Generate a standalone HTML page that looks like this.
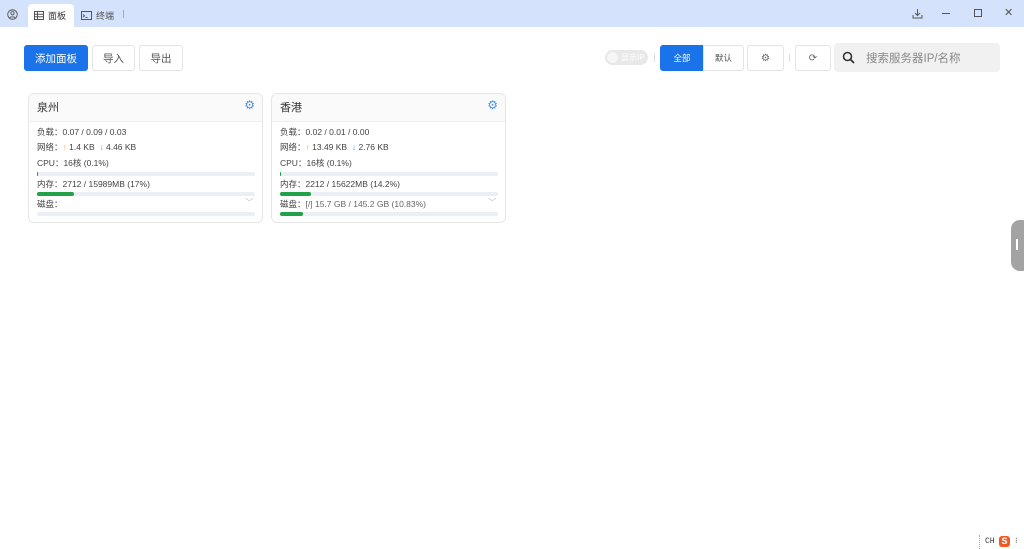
<!DOCTYPE html><html><head><meta charset="utf-8"><style>
*{box-sizing:border-box;margin:0;padding:0}
body{width:1024px;height:549px;overflow:hidden;background:#fff;font-family:"Liberation Sans","Noto Sans CJK SC",sans-serif;color:#333;position:relative}
.top{position:absolute;left:0;top:0;width:1024px;height:27px;background:#d4e3fb}
.abs{position:absolute}
.tab{position:absolute;top:4px;height:23px;font-size:9px;display:flex;align-items:center;gap:4px;padding-left:6px}
.btn{position:absolute;top:45px;height:26px;border:1px solid #e3e3e3;border-radius:3px;font-size:10.5px;color:#555;display:flex;align-items:center;justify-content:center;background:#fff}
.card{position:absolute;top:93px;width:235px;height:130px;border:1px solid #e6e6e6;border-radius:6px;overflow:hidden}
.ch{height:28px;background:#fafafa;border-bottom:1px solid #eee;font-size:11px;padding:5px 8px;position:relative}
.row{position:absolute;left:8px;font-size:8.5px;color:#444;white-space:nowrap}
.bar{position:absolute;left:8px;width:218px;height:4px;border-radius:2px;background:#ebeef3}
.bar i{display:block;height:4px;border-radius:2px;background:#21a148}
</style></head><body>
<div class="top"></div>
<svg class="abs" style="left:7px;top:9px" width="11" height="11" viewBox="0 0 12 12"><circle cx="6" cy="6" r="5.2" fill="none" stroke="#555" stroke-width="1"/><circle cx="6" cy="4.6" r="1.8" fill="none" stroke="#555"/><path d="M2.8 10c1-2 5.4-2 6.4 0" fill="none" stroke="#555"/></svg>
<div class="tab" style="left:28px;width:46px;background:#fff;border-radius:4px 4px 0 0"><svg width="10" height="9"><rect x=".5" y=".5" width="9" height="8" fill="none" stroke="#555"/><path d="M.5 3.2h9M.5 5.8h9M3.5 .5v8" stroke="#555"/></svg>面板</div>
<div class="tab" style="left:75px;color:#555"><svg width="11" height="9"><rect x=".5" y=".5" width="10" height="8" fill="none" stroke="#555"/><path d="M2 3.5l1.5 1.3L2 6M4.5 6.5h2" stroke="#555" fill="none"/></svg>终端</div>
<div class="abs" style="left:123px;top:10px;width:1px;height:8px;background:#aaa"></div>
<svg class="abs" style="left:912px;top:8px" width="11" height="11"><path d="M5.5 1v6M3 5l2.5 2.5L8 5M1 7v3h9V7" stroke="#555" fill="none"/></svg>
<div class="abs" style="left:942px;top:13px;width:8px;height:1px;background:#555"></div>
<div class="abs" style="left:974px;top:9px;width:8px;height:8px;border:1px solid #555"></div>
<div class="abs" style="left:1004px;top:6px;font-size:11px;color:#555">✕</div>

<div class="btn" style="left:24px;width:64px;background:#1a73e8;border-color:#1a73e8;color:#fff">添加面板</div>
<div class="btn" style="left:92px;width:43px">导入</div>
<div class="btn" style="left:139px;width:44px">导出</div>

<div class="abs" style="left:605px;top:50px;width:43px;height:15px;border-radius:8px;background:#e8e8e8;font-size:8px;color:#fff;padding:2px 0 0 16px">显示IP</div>
<div class="abs" style="left:607px;top:52px;width:11px;height:11px;border-radius:50%;background:#f6f6f6"></div>
<div class="abs" style="left:654px;top:54px;width:1px;height:8px;background:#ddd"></div>
<div class="btn" style="left:660px;width:44px;background:#1a73e8;border-color:#1a73e8;color:#fff;font-size:8.5px;border-radius:3px 0 0 3px">全部</div>
<div class="btn" style="left:703px;width:41px;font-size:8.5px;border-radius:0 3px 3px 0">默认</div>
<div class="btn" style="left:747px;width:37px;font-size:10px;color:#666">⚙</div>
<div class="abs" style="left:789px;top:54px;width:1px;height:8px;background:#ddd"></div>
<div class="btn" style="left:795px;width:36px;font-size:10px;color:#666">⟳</div>
<div class="abs" style="left:834px;top:43px;width:166px;height:29px;background:#f1f1f1;border-radius:4px;font-size:11.5px;color:#888;padding:7px 0 0 32px">搜索服务器IP/名称</div>
<svg class="abs" style="left:842px;top:51px" width="13" height="13"><circle cx="5.5" cy="5.5" r="4" fill="none" stroke="#333" stroke-width="1.6"/><path d="M8.5 8.5l3.5 3.5" stroke="#333" stroke-width="1.8"/></svg>

<div class="card" style="left:28px">
<div class="ch">泉州<span style="position:absolute;right:7px;top:4px;color:#4a8fe8;font-size:12px">⚙</span></div>
<div class="row" style="top:32px">负载：0.07 / 0.09 / 0.03</div>
<div class="row" style="top:47px">网络：<span style="color:#f0b24a">↑</span> 1.4 KB &nbsp;<span style="color:#5b9be8">↓</span> 4.46 KB</div>
<div class="row" style="top:63px">CPU：16核 (0.1%)</div>
<div class="bar" style="top:78px"><i style="width:1px"></i></div>
<div class="row" style="top:84px">内存：2712 / 15989MB (17%)</div>
<div class="bar" style="top:98px"><i style="width:37px"></i></div>
<div class="row" style="top:104px">磁盘：</div>
<div class="row" style="top:102px;left:216px;color:#bbb">﹀</div>
<div class="bar" style="top:118px"></div>
</div>
<div class="card" style="left:271px">
<div class="ch">香港<span style="position:absolute;right:7px;top:4px;color:#4a8fe8;font-size:12px">⚙</span></div>
<div class="row" style="top:32px">负载：0.02 / 0.01 / 0.00</div>
<div class="row" style="top:47px">网络：<span style="color:#f0b24a">↑</span> 13.49 KB &nbsp;<span style="color:#5b9be8">↓</span> 2.76 KB</div>
<div class="row" style="top:63px">CPU：16核 (0.1%)</div>
<div class="bar" style="top:78px"><i style="width:1px"></i></div>
<div class="row" style="top:84px">内存：2212 / 15622MB (14.2%)</div>
<div class="bar" style="top:98px"><i style="width:31px"></i></div>
<div class="row" style="top:104px">磁盘：<span style="color:#666">[/] 15.7 GB / 145.2 GB (10.83%)</span></div>
<div class="row" style="top:102px;left:216px;color:#bbb">﹀</div>
<div class="bar" style="top:118px"><i style="width:23px"></i></div>
</div>

<div class="abs" style="left:1011px;top:220px;width:20px;height:51px;border-radius:9px;background:#a3a3a3"></div>
<div class="abs" style="left:1016px;top:239px;width:2px;height:11px;background:#fff"></div>
<div class="abs" style="left:979px;top:535px;width:1px;height:14px;border-left:1px dotted #aaa"></div>
<div class="abs" style="left:985px;top:537px;font-size:8px;color:#333;font-family:'Liberation Mono',monospace">CH</div>
<div class="abs" style="left:999px;top:536px;width:11px;height:11px;border-radius:3px;background:#f05a22;color:#fff;font-size:9px;font-weight:bold;text-align:center;line-height:11px">S</div>
<div class="abs" style="left:1015px;top:536px;font-size:8px;color:#333">⁝</div>
</body></html>
